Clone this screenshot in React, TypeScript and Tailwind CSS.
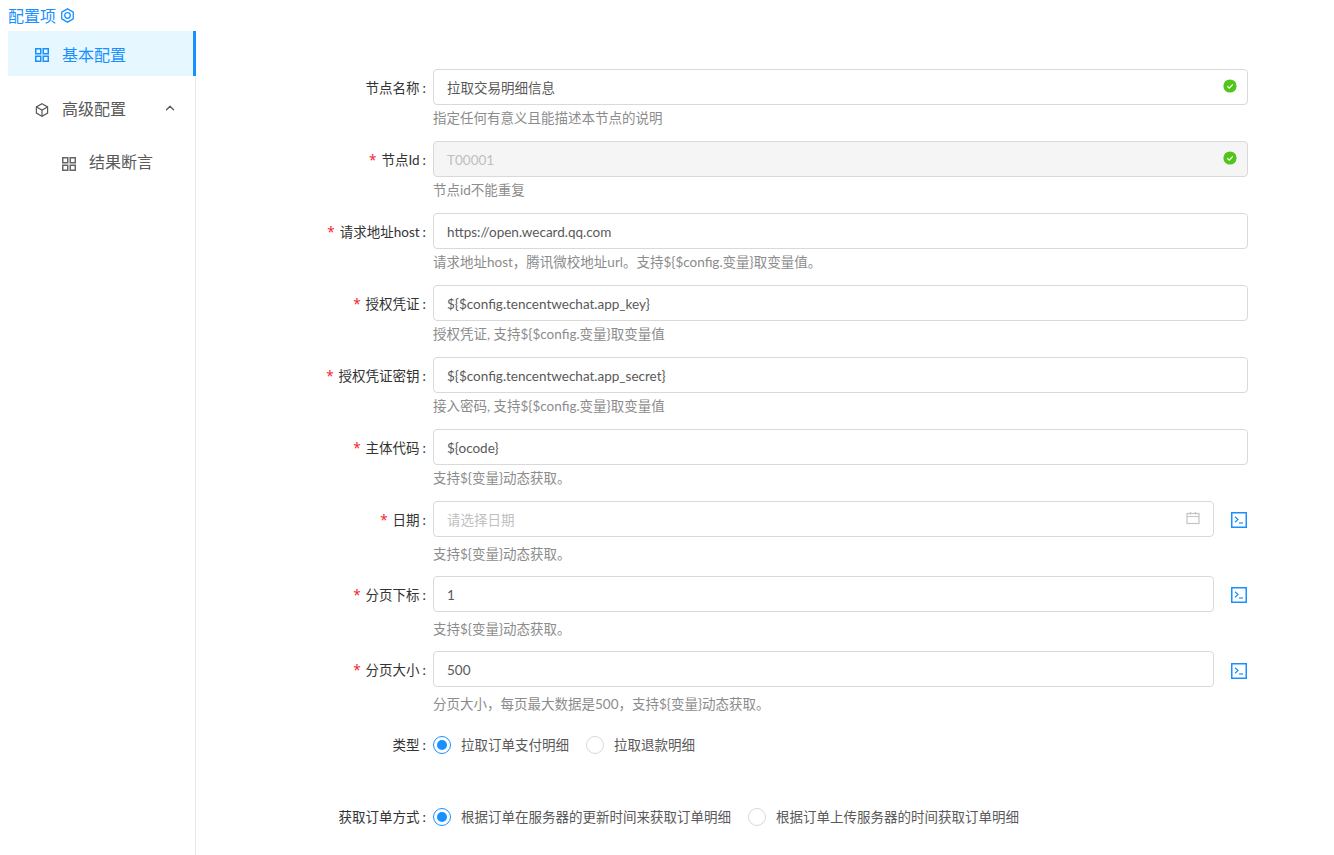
import { ChevronUp } from "lucide-react";

const FONT = "font-['Lato','Noto_Sans_CJK_SC',sans-serif]";

const GridIcon = ({ className }: { className: string }) => (
  <svg width="14" height="14" viewBox="0 0 14 14" fill="none" stroke="currentColor" strokeWidth="1.5" className={className}>
    <rect x="0.75" y="0.75" width="5" height="5" />
    <rect x="8.25" y="0.75" width="5" height="5" />
    <rect x="0.75" y="8.25" width="5" height="5" />
    <rect x="8.25" y="8.25" width="5" height="5" />
  </svg>
);

const CubeIcon = () => (
  <svg width="14" height="14" viewBox="0 0 14 14" fill="none" stroke="currentColor" strokeWidth="1.2" className="translate-y-px text-[#595959]">
    <path d="M7 .8l5.6 3.1v6.2L7 13.2 1.4 10.1V3.9z" />
    <path d="M1.4 3.9L7 7l5.6-3.1M7 7v6.2" />
  </svg>
);

const HexIcon = () => (
  <svg width="15" height="15" viewBox="0 0 14 14" fill="none" stroke="currentColor" strokeWidth="1.2" className="text-[#1890ff]">
    <path d="M7 .8l5.4 3.1v6.2L7 13.2 1.6 10.1V3.9z" />
    <circle cx="7" cy="7" r="2.6" />
  </svg>
);

const CheckBadge = () => (
  <svg width="14" height="14" viewBox="0 0 14 14" className="absolute right-[10px] top-[9px]">
    <circle cx="7" cy="7" r="6.6" fill="#52c41a" />
    <path d="M4.3 7.2l2 1.9 3.5-3.8" fill="none" stroke="#fff" strokeWidth="1.2" />
  </svg>
);

const CalendarIcon = () => (
  <svg width="14" height="14" viewBox="0 0 14 14" fill="none" stroke="#c4c4c4" strokeWidth="1.2" className="absolute right-[13px] top-[9px]">
    <rect x="1" y="2.5" width="12" height="10" />
    <path d="M1 5.5h12M4.5 1v2.5M9.5 1v2.5" />
  </svg>
);

const TerminalIcon = ({ className }: { className: string }) => (
  <svg width="16" height="16" viewBox="0 0 16 16" fill="none" stroke="#1890ff" className={`shrink-0 ${className}`}>
    <rect x="0.75" y="0.75" width="14.5" height="14.5" strokeWidth="1.5" />
    <path d="M4 4.8l3 2.7-3 2.7" strokeWidth="1.2" />
    <path d="M8 11h4" strokeWidth="1.2" />
  </svg>
);

const Radio = ({ checked }: { checked?: boolean }) => (
  <span
    className={`flex h-[18px] w-[18px] shrink-0 items-center justify-center rounded-full border bg-white ${
      checked ? "border-[#1890ff]" : "border-[#d9d9d9]"
    }`}
  >
    {checked && <span className="h-[10px] w-[10px] rounded-full bg-[#1890ff]" />}
  </span>
);

type FieldProps = {
  label: string;
  required?: boolean;
  value?: string;
  placeholder?: string;
  help: string;
  ok?: boolean;
  disabled?: boolean;
  date?: boolean;
  expr?: string;
};

const Label = ({ label, required, className }: { label: string; required?: boolean; className: string }) => (
  <label className={`flex w-[433px] shrink-0 items-center justify-end pr-[7px] text-[13.5px] text-[#333] ${className}`}>
    {required && <span className="mr-[5px] font-['Noto_Sans',sans-serif] text-[#f5222d]">*</span>}
    {label}
    <span className="ml-[3px]">:</span>
  </label>
);

const Field = ({ label, required, value, placeholder, help, ok, disabled, date, expr }: FieldProps) => (
  <div className={expr ? "h-[75px]" : "h-[72px]"}>
    <div className="flex items-center">
      <Label label={label} required={required} className="pt-[3px]" />
      <div className="flex flex-1 items-center">
        <div
          className={`relative flex h-9 flex-1 items-center rounded-[4px] border border-[#d9d9d9] px-[13px] pt-[2px] text-[13.5px] ${
            disabled ? "bg-[#f5f5f5] text-[#bfbfbf]" : "bg-white text-[#595959]"
          }`}
        >
          {value ?? <span className="text-[#bfbfbf]">{placeholder}</span>}
          {ok && <CheckBadge />}
          {date && <CalendarIcon />}
        </div>
        {expr && (
          <div className="flex w-[34px] justify-end pr-px">
            <TerminalIcon className={expr} />
          </div>
        )}
      </div>
    </div>
    <div className={`pl-[433px] text-[13.5px] leading-[20px] text-[#8c8c8c] ${expr ? "mt-[7px]" : "mt-[3px]"}`}>{help}</div>
  </div>
);

const fields: FieldProps[] = [
  { label: "节点名称", value: "拉取交易明细信息", help: "指定任何有意义且能描述本节点的说明", ok: true },
  { label: "节点Id", required: true, value: "T00001", help: "节点id不能重复", ok: true, disabled: true },
  { label: "请求地址host", required: true, value: "https://open.wecard.qq.com", help: "请求地址host，腾讯微校地址url。支持${$config.变量}取变量值。" },
  { label: "授权凭证", required: true, value: "${$config.tencentwechat.app_key}", help: "授权凭证, 支持${$config.变量}取变量值" },
  { label: "授权凭证密钥", required: true, value: "${$config.tencentwechat.app_secret}", help: "接入密码, 支持${$config.变量}取变量值" },
  { label: "主体代码", required: true, value: "${ocode}", help: "支持${变量}动态获取。" },
  { label: "日期", required: true, placeholder: "请选择日期", help: "支持${变量}动态获取。", date: true, expr: "translate-y-px" },
  { label: "分页下标", required: true, value: "1", help: "支持${变量}动态获取。", expr: "translate-y-px" },
  { label: "分页大小", required: true, value: "500", help: "分页大小，每页最大数据是500，支持${变量}动态获取。", expr: "translate-y-[2px]" },
];

export default function App() {
  return (
    <div className={`${FONT} h-[855px] w-[1334px] overflow-hidden bg-white`}>
      <div className="flex h-[31px] items-center gap-[4px] pl-2 text-[16px] text-[#1890ff]">
        配置项
        <HexIcon />
      </div>
      <div className="flex">
        <aside className="ml-2 h-[824px] w-[188px] shrink-0 border-r border-[#e8e8e8] text-[16px] text-[#595959]">
          <div className="-mr-px flex h-[45px] items-center gap-[13px] border-r-[3px] border-[#1890ff] bg-[#e6f7ff] pl-[27px] pt-[2px] text-[#1890ff]">
            <GridIcon className="text-[#1890ff]" />
            基本配置
          </div>
          <div className="mt-[10px] flex h-[45px] items-center gap-[13px] pl-[27px]">
            <CubeIcon />
            高级配置
            <ChevronUp size={14} strokeWidth={2.2} className="ml-auto mr-[18px] -translate-y-px text-[#595959]" />
          </div>
          <div className="mt-[8px] flex h-[45px] items-center gap-[13px] pl-[54px]">
            <GridIcon className="translate-y-[2px] text-[#666]" />
            结果断言
          </div>
        </aside>
        <main className="-ml-[196px] flex-1 pr-[86px] pt-[38px]">
          <div>
            {fields.map((f) => (
              <Field key={f.label} {...f} />
            ))}
          </div>
          <div className="mt-[1px] flex h-9 items-center text-[13.5px]">
            <Label label="类型" className="pt-px" />
            <Radio checked />
            <span className="ml-[10px] text-[#595959]">拉取订单支付明细</span>
            <span className="ml-[17px]">
              <Radio />
            </span>
            <span className="ml-[10px] text-[#595959]">拉取退款明细</span>
          </div>
          <div className="mt-[36px] flex h-9 items-center text-[13.5px]">
            <Label label="获取订单方式" className="pt-px" />
            <Radio checked />
            <span className="ml-[10px] text-[#595959]">根据订单在服务器的更新时间来获取订单明细</span>
            <span className="ml-[17px]">
              <Radio />
            </span>
            <span className="ml-[10px] text-[#595959]">根据订单上传服务器的时间获取订单明细</span>
          </div>
        </main>
      </div>
    </div>
  );
}
